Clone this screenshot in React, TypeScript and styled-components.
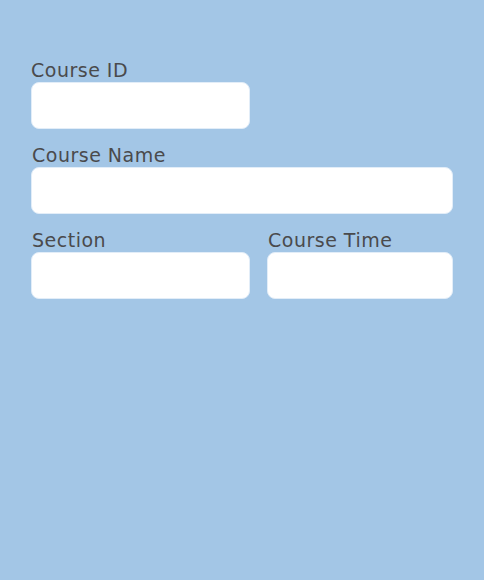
import React from 'react'
import styled, { createGlobalStyle } from 'styled-components'

const GlobalStyle = createGlobalStyle`
    html, body {
        margin: 0;
        padding: 0;
        background: #a3c6e6;
    }
    body {
        font-family: "DejaVu Sans", "Open Sans", sans-serif;
    }
`

const Page = styled.div`
    width: 484px;
    height: 580px;
    box-sizing: border-box;
    padding: 58px 31px 0;
    background: #a3c6e6;
`

const Form = styled.form`
    display: grid;
    grid-template-columns: 219px 1fr;
    column-gap: 17px;
    row-gap: 14px;
`

const Field = styled.div<{ $span?: boolean }>`
    display: flex;
    flex-direction: column;
    grid-column: ${p => (p.$span ? '1 / -1' : 'auto')};
`

const Label = styled.label<{ $indent?: number }>`
    font-size: 19px;
    line-height: 24px;
    letter-spacing: 0.5px;
    color: #4a4a4c;
    padding-left: ${p => p.$indent ?? 1}px;
`

const Input = styled.input`
    box-sizing: border-box;
    height: 47px;
    width: 100%;
    border: 1px solid #e2edf8;
    border-radius: 8px;
    background: #ffffff;
    outline: none;
    padding: 0 12px;
    font-family: inherit;
    font-size: 16px;
`

const App: React.FC = () => {
    return (
        <>
            <GlobalStyle />
            <Page>
                <Form>
                    <Field>
                        <Label $indent={0}>Course ID</Label>
                        <Input type="text" />
                    </Field>
                    <div />
                    <Field $span>
                        <Label>Course Name</Label>
                        <Input type="text" />
                    </Field>
                    <Field>
                        <Label>Section</Label>
                        <Input type="text" />
                    </Field>
                    <Field>
                        <Label>Course Time</Label>
                        <Input type="text" />
                    </Field>
                </Form>
            </Page>
        </>
    )
}

export default App
